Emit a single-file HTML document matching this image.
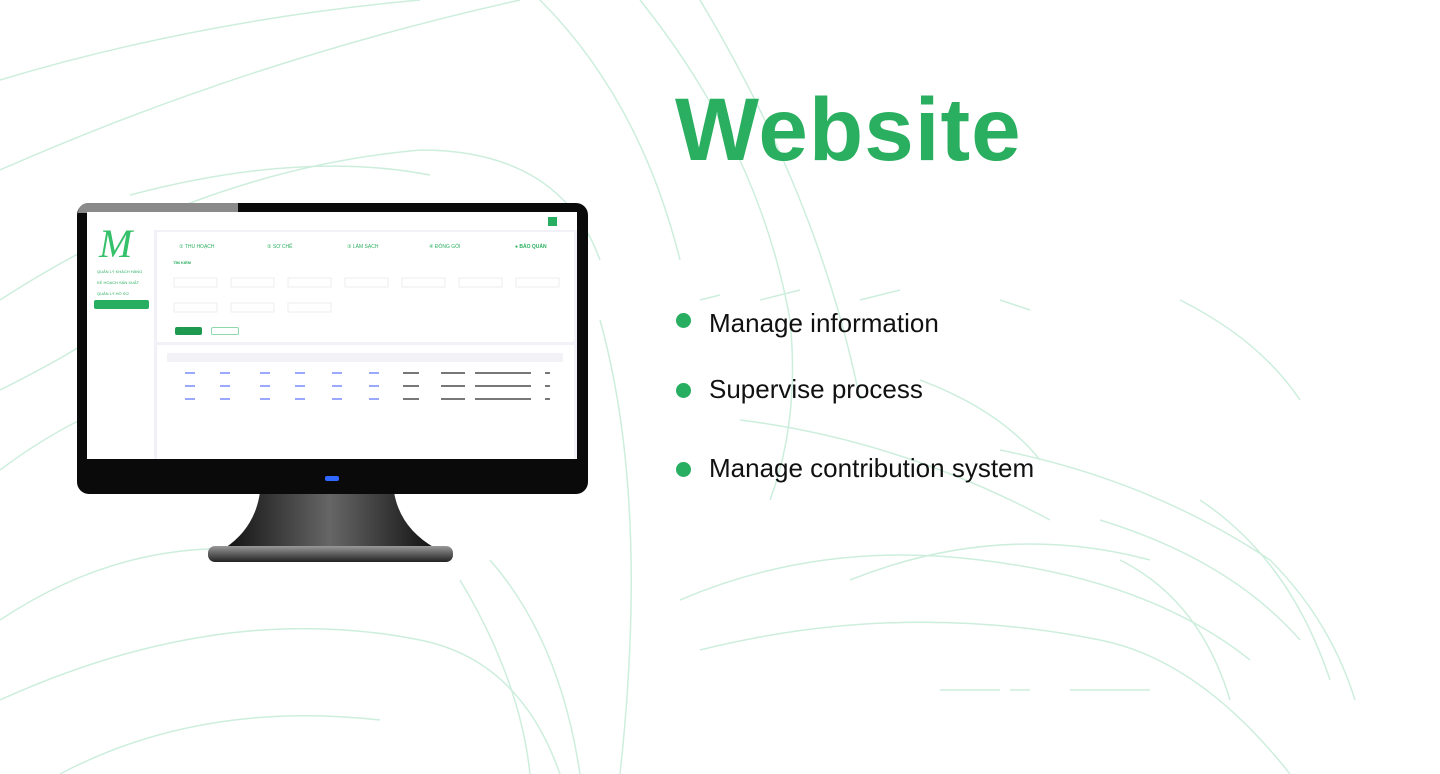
<!DOCTYPE html>
<html><head><meta charset="utf-8"><style>
*{margin:0;padding:0;box-sizing:border-box}
body{width:1440px;height:774px;background:#fff;position:relative;overflow:hidden;font-family:"Liberation Sans",sans-serif}
.abs{position:absolute}
.title{left:675px;top:78px;font-size:89px;font-weight:bold;color:#2aaf60;letter-spacing:1px}
.b{left:709px;font-size:26px;color:#111}
.dot{width:15px;height:15px;border-radius:50%;background:#27ae60;left:676px}
.t{font-size:4px;color:#888}
</style></head><body>
<svg class="abs" style="left:0;top:0" width="1440" height="774" fill="none" stroke="#cdeedd" stroke-width="1.5">
<path d="M0 80 Q200 20 420 0"/>
<path d="M0 170 Q250 60 520 0"/>
<path d="M0 300 Q200 170 420 150 Q560 150 600 260"/>
<path d="M130 195 Q300 150 430 175"/>
<path d="M640 0 Q760 150 790 320 Q800 420 770 500"/>
<path d="M700 0 Q820 200 860 400"/>
<path d="M540 0 Q640 100 680 260"/>
<path d="M0 620 Q150 520 320 560"/>
<path d="M0 700 Q220 600 420 640 Q520 660 560 774"/>
<path d="M60 774 Q200 700 380 720"/>
<path d="M460 580 Q520 680 530 774"/>
<path d="M600 320 Q650 500 620 774"/>
<path d="M490 560 Q560 640 580 774"/>
<path d="M680 600 Q820 540 980 560 Q1150 580 1250 660"/>
<path d="M700 650 Q900 600 1100 640 Q1200 660 1290 774"/>
<path d="M1000 450 Q1150 480 1270 560 Q1330 620 1355 700"/>
<path d="M1100 520 Q1230 560 1300 640"/>
<path d="M1200 500 Q1290 560 1330 680"/>
<path d="M850 580 Q1000 520 1150 560"/>
<path d="M1120 560 Q1200 600 1230 700"/>
<path d="M1180 300 Q1260 340 1300 400"/>
<path d="M920 380 Q1000 410 1040 460"/>
<path d="M740 420 Q900 440 1050 520"/>
<path d="M940 690 L1000 690 M1010 690 L1030 690 M1070 690 L1150 690"/>
<path d="M0 390 Q60 360 90 340"/>
<path d="M0 470 Q40 440 80 420"/>
<path d="M700 300 L720 295 M760 300 L800 290 M860 300 L900 290 M1000 300 L1030 310"/>
</svg>

<div class="abs title">Website</div>
<div class="abs dot" style="top:313px"></div>
<div class="abs b" style="top:308px">Manage information</div>
<div class="abs dot" style="top:383px"></div>
<div class="abs b" style="top:374px">Supervise process</div>
<div class="abs dot" style="top:462px"></div>
<div class="abs b" style="top:453px">Manage contribution system</div>

<svg class="abs" style="left:200px;top:488px" width="260" height="80">
<defs><linearGradient id="g" x1="0" x2="1"><stop offset="0" stop-color="#111"/><stop offset=".5" stop-color="#666"/><stop offset="1" stop-color="#111"/></linearGradient>
<linearGradient id="g2" x1="0" x2="0" y1="0" y2="1"><stop offset="0" stop-color="#999"/><stop offset="1" stop-color="#222"/></linearGradient></defs>
<path d="M60 4 L194 4 Q200 40 235 60 L25 60 Q55 40 60 4Z" fill="url(#g)"/>
<rect x="8" y="58" width="245" height="16" rx="7" fill="url(#g2)"/>
</svg>
<div class="abs" style="left:77px;top:203px;width:511px;height:291px;background:#0a0a0a;border-radius:12px"></div>
<div class="abs" style="left:78px;top:203px;width:160px;height:10px;background:#8a8a8a;border-radius:10px 0 0 0"></div>
<div class="abs" style="left:325px;top:476px;width:14px;height:5px;background:#2f67ff;border-radius:2px"></div>
<div class="abs" style="left:87px;top:212px;width:490px;height:247px;background:#fff">
  <div class="abs" style="left:12px;top:8px;font-family:'Liberation Serif',serif;font-size:40px;color:#35c06a;font-style:italic">M</div>
  <div class="abs t" style="left:10px;top:57px;color:#2aaf60">QUẢN LÝ KHÁCH HÀNG</div>
  <div class="abs t" style="left:10px;top:68px;color:#2aaf60">KẾ HOẠCH SẢN XUẤT</div>
  <div class="abs t" style="left:10px;top:79px;color:#2aaf60">QUẢN LÝ HỒ SƠ</div>
  <div class="abs" style="left:7px;top:88px;width:55px;height:9px;background:#27ae60;border-radius:2px"></div>
  <div class="abs" style="left:67px;top:0;width:423px;height:247px;background:#f1f1f7"></div>
  <div class="abs" style="left:67px;top:0;width:423px;height:18px;background:#fff"></div>
  <div class="abs" style="left:461px;top:5px;width:9px;height:9px;background:#27ae60"></div>
  <div class="abs" style="left:70px;top:20px;width:417px;height:110px;background:#fff;border-radius:2px">
    <div class="abs t" style="left:22px;top:12px;color:#2aaf60;font-size:5px">① THU HOẠCH</div>
    <div class="abs t" style="left:110px;top:12px;color:#2aaf60;font-size:5px">② SƠ CHẾ</div>
    <div class="abs t" style="left:190px;top:12px;color:#2aaf60;font-size:5px">③ LÀM SẠCH</div>
    <div class="abs t" style="left:272px;top:12px;color:#2aaf60;font-size:5px">④ ĐÓNG GÓI</div>
    <div class="abs t" style="left:358px;top:12px;color:#2aaf60;font-size:5px;font-weight:bold">● BẢO QUẢN</div>
    <div class="abs t" style="left:16px;top:28px;color:#2aaf60;font-weight:bold">TÌM KIẾM</div>
    <div class="abs" style="left:18px;top:95px;width:27px;height:8px;background:#1e9a50;border-radius:2px"></div>
    <div class="abs" style="left:54px;top:95px;width:28px;height:8px;border:1px solid #8fd8ac;border-radius:2px"></div>
  </div>
  <div class="abs" style="left:70px;top:133px;width:417px;height:114px;background:#fff">
    <div class="abs" style="left:10px;top:8px;width:396px;height:9px;background:#f3f3f7"></div>
  </div>
</div>
<svg class="abs" style="left:87px;top:212px" width="490" height="247">
<g fill="none" stroke="#eee" stroke-width="1">
<rect x="87" y="66" width="43" height="9"/><rect x="144" y="66" width="43" height="9"/><rect x="201" y="66" width="43" height="9"/><rect x="258" y="66" width="43" height="9"/><rect x="315" y="66" width="43" height="9"/><rect x="372" y="66" width="43" height="9"/><rect x="429" y="66" width="43" height="9"/>
<rect x="87" y="91" width="43" height="9"/><rect x="144" y="91" width="43" height="9"/><rect x="201" y="91" width="43" height="9"/>
</g>
<g fill="#9aa8ff">
<rect x="98" y="160" width="10" height="2"/><rect x="133" y="160" width="10" height="2"/><rect x="173" y="160" width="10" height="2"/><rect x="208" y="160" width="10" height="2"/><rect x="245" y="160" width="10" height="2"/><rect x="282" y="160" width="10" height="2"/>
<rect x="98" y="173" width="10" height="2"/><rect x="133" y="173" width="10" height="2"/><rect x="173" y="173" width="10" height="2"/><rect x="208" y="173" width="10" height="2"/><rect x="245" y="173" width="10" height="2"/><rect x="282" y="173" width="10" height="2"/>
<rect x="98" y="186" width="10" height="2"/><rect x="133" y="186" width="10" height="2"/><rect x="173" y="186" width="10" height="2"/><rect x="208" y="186" width="10" height="2"/><rect x="245" y="186" width="10" height="2"/><rect x="282" y="186" width="10" height="2"/>
</g>
<g fill="#777">
<rect x="316" y="160" width="16" height="2"/><rect x="354" y="160" width="24" height="2"/><rect x="388" y="160" width="56" height="2"/><rect x="458" y="160" width="5" height="2"/>
<rect x="316" y="173" width="16" height="2"/><rect x="354" y="173" width="24" height="2"/><rect x="388" y="173" width="56" height="2"/><rect x="458" y="173" width="5" height="2"/>
<rect x="316" y="186" width="16" height="2"/><rect x="354" y="186" width="24" height="2"/><rect x="388" y="186" width="56" height="2"/><rect x="458" y="186" width="5" height="2"/>
</g>
</svg>
</body></html>
